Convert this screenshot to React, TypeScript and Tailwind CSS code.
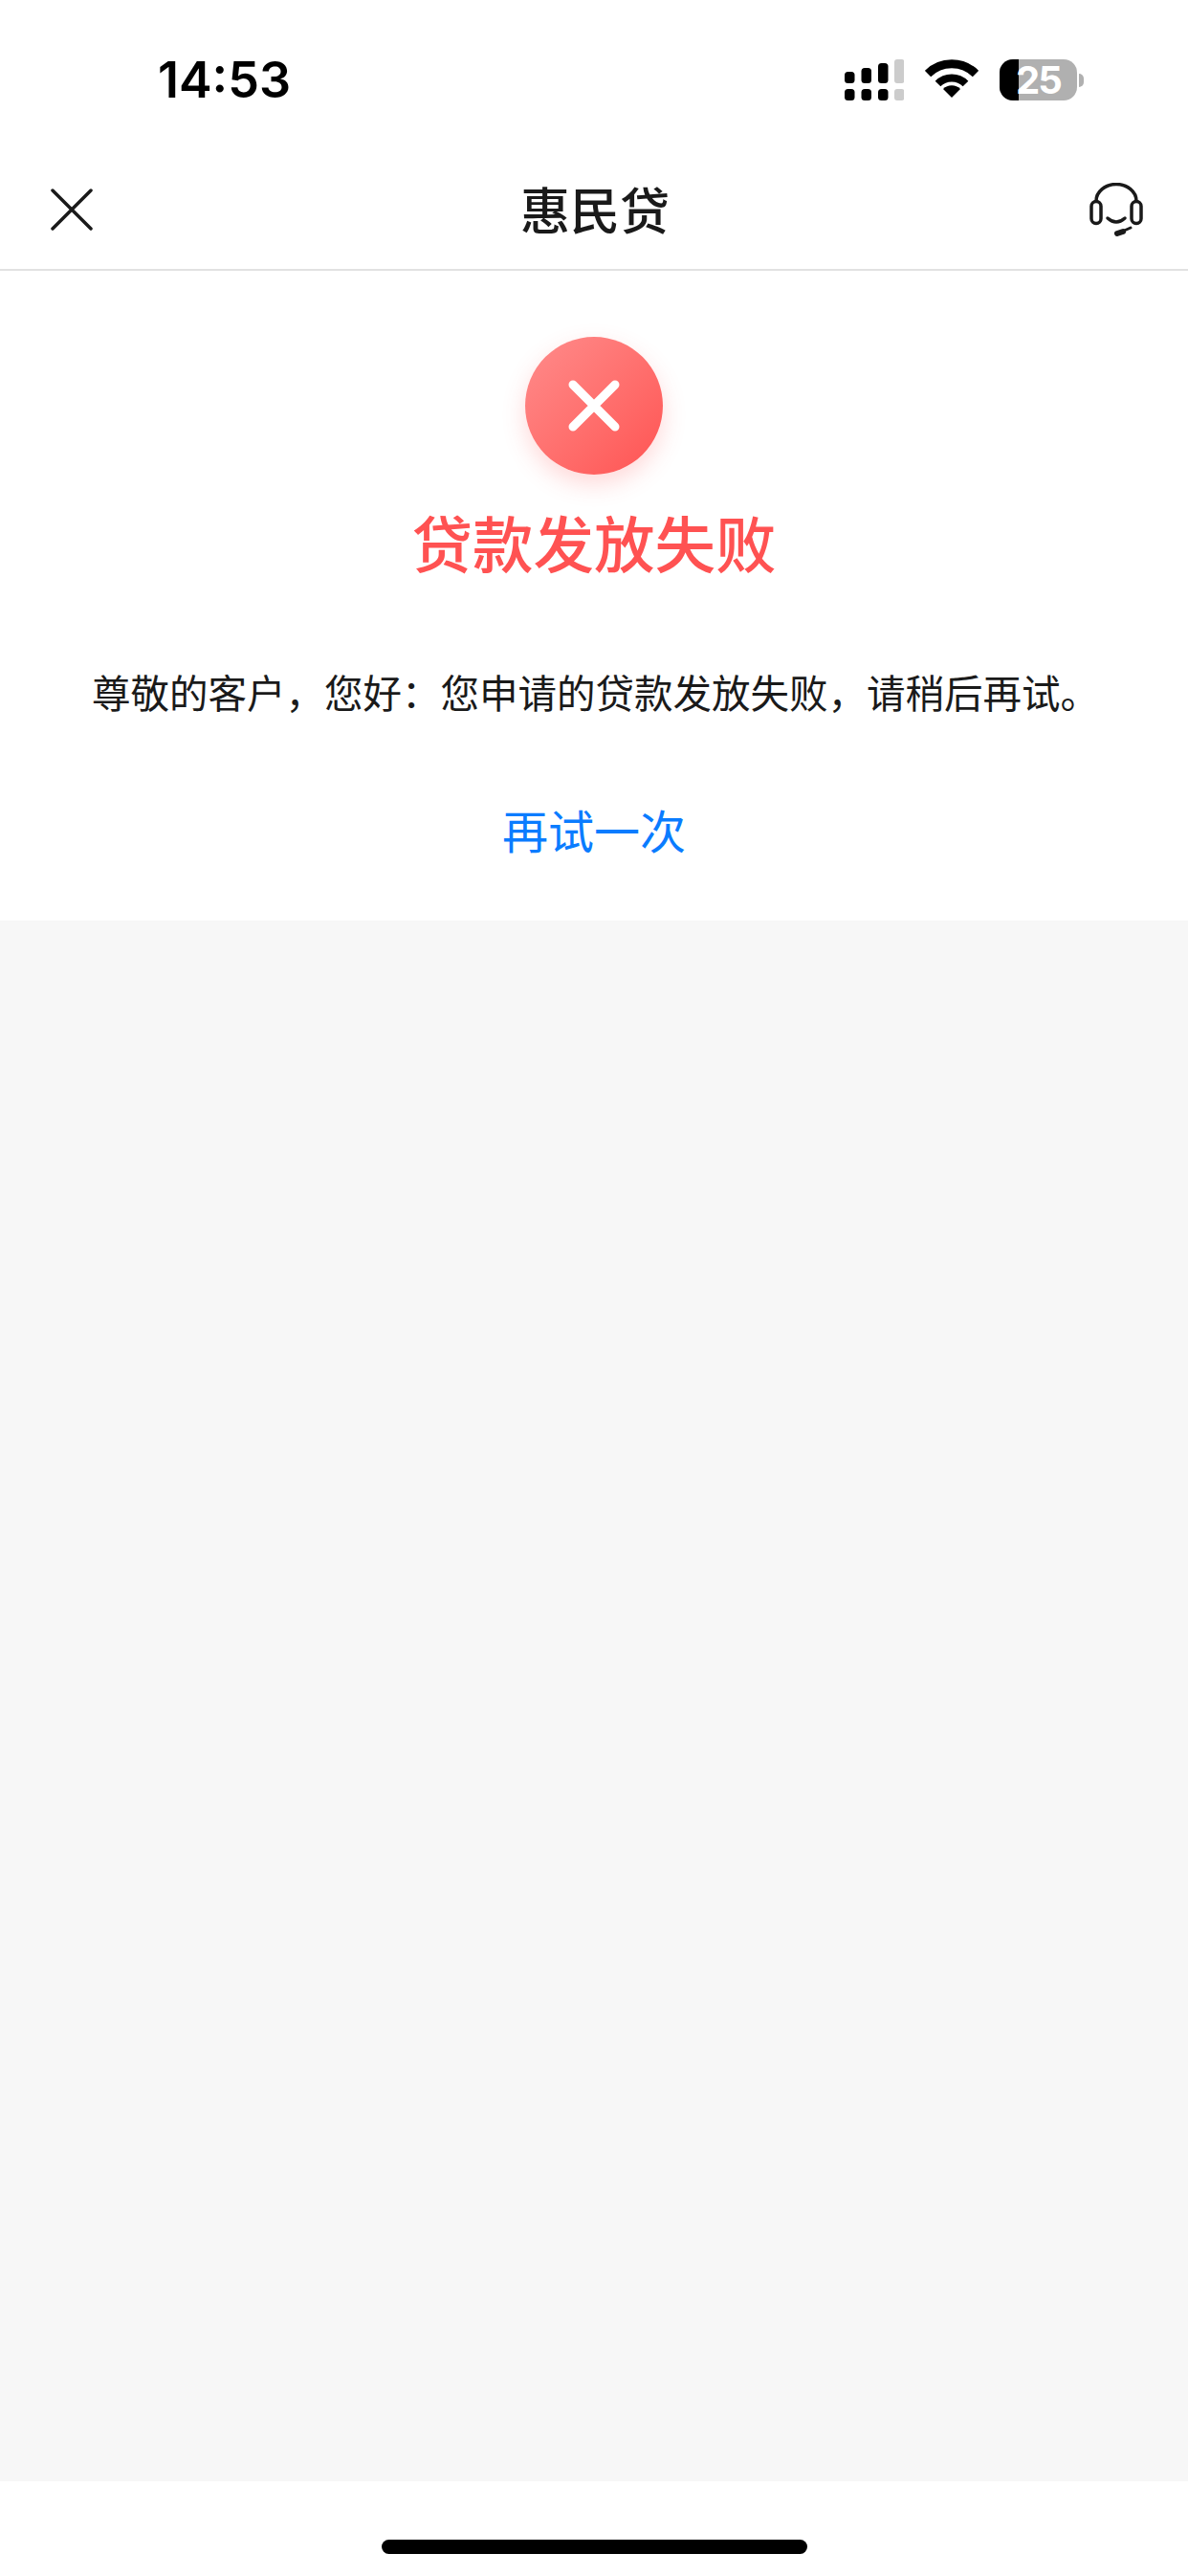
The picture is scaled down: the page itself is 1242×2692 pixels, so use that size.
const CJK = "font-['Noto_Sans_CJK_SC','Noto_Sans',sans-serif]";

function SignalIcon() {
  return (
    <svg width="62" height="43" viewBox="0 0 62 43">
      <rect x="0" y="13" width="10.5" height="12" rx="3.5" fill="#000" />
      <rect x="17.5" y="9" width="10.5" height="16" rx="3.5" fill="#000" />
      <rect x="35" y="4" width="10.5" height="21" rx="3.5" fill="#000" />
      <rect x="52" y="0" width="10.5" height="25" rx="3" fill="#ccc" />
      <rect x="0" y="31" width="10.5" height="12" rx="3.5" fill="#000" />
      <rect x="17.5" y="31" width="10.5" height="12" rx="3.5" fill="#000" />
      <rect x="35" y="31" width="10.5" height="12" rx="3.5" fill="#000" />
      <rect x="52" y="31" width="10.5" height="12" rx="3" fill="#ccc" />
    </svg>
  );
}

function WifiIcon() {
  return (
    <svg width="56" height="40" viewBox="0 0 56 40" fill="none">
      <path d="M3 15 A35.5 35.5 0 0 1 53 15" stroke="#000" strokeWidth="9" />
      <path d="M13.5 25.5 A20.5 20.5 0 0 1 42.5 25.5" stroke="#000" strokeWidth="8" />
      <path d="M28 40 L19 31 A12.7 12.7 0 0 1 37 31 Z" fill="#000" />
    </svg>
  );
}

function Battery() {
  return (
    <div className="flex items-center gap-[2px]">
      <div className="relative h-[43px] w-[81px] rounded-[14px] bg-[#b0b0b0]">
        <div className="h-full w-[20px] rounded-l-[14px] bg-black" />
        <span className="absolute inset-0 flex items-center justify-center font-['Inter',sans-serif] text-[40px] leading-none font-bold tracking-[-2px] text-white">
          25
        </span>
      </div>
      <div className="h-[14px] w-[5px] rounded-r-full bg-[#b0b0b0]" />
    </div>
  );
}

function HeadsetIcon() {
  return (
    <svg width="56" height="57" viewBox="0 0 56 57" fill="none" stroke="#1a1a1a" strokeLinecap="round">
      <path d="M7 19 A21 17.5 0 0 1 49 19" strokeWidth="3.5" />
      <rect x="2" y="19.5" width="10" height="23" rx="5" strokeWidth="3.5" />
      <rect x="44" y="19.5" width="10" height="23" rx="5" strokeWidth="3.5" />
      <path d="M19 37 Q28 45 37 37" strokeWidth="3.5" />
      <path d="M34 51 L43 47" strokeWidth="3" />
      <path d="M29 53 L35 51" strokeWidth="6" />
    </svg>
  );
}

export default function App() {
  return (
    <div className={`flex h-[2692px] w-[1242px] flex-col bg-white ${CJK}`} lang="zh-CN">
      <div className="flex h-[157px] shrink-0 items-start justify-between pt-[53px] pr-[109px] pl-[165px]">
        <span className="font-['Inter',sans-serif] text-[52px] leading-[62px] font-semibold text-black">14:53</span>
        <div className="mt-[9px] flex items-start gap-[22px]">
          <SignalIcon />
          <WifiIcon />
          <Battery />
        </div>
      </div>

      <div className="flex h-[126px] shrink-0 items-center justify-between border-b-2 border-[#e2e2e2] pr-[47px] pl-[53px]">
        <div className="w-[52px]">
          <svg width="44" height="44" viewBox="0 0 44 44" fill="none" stroke="#1a1a1a" strokeWidth="3.5" strokeLinecap="round">
            <path d="M2 2 L42 42 M42 2 L2 42" />
          </svg>
        </div>
        <span className="pb-[2px] text-[52px] leading-[72px] font-medium text-[#1a1a1a]">惠民贷</span>
        <HeadsetIcon />
      </div>

      <div className="flex h-[679px] shrink-0 flex-col items-center">
        <div className="mt-[69px] flex h-[144px] w-[144px] items-center justify-center rounded-full bg-linear-to-br from-[#ff8b8b] to-[#ff5252] shadow-[0_10px_24px_rgba(255,82,82,0.22)]">
          <svg width="54" height="54" viewBox="0 0 54 54" fill="none" stroke="#fff" strokeWidth="9" strokeLinecap="round">
            <path d="M5 5 L49 49 M49 5 L5 49" />
          </svg>
        </div>
        <h1 className="mt-[24px] text-[63.5px] leading-[90px] font-medium text-[#ff5252]">贷款发放失败</h1>
        <p className="mt-[85px] ml-[3px] text-[40.5px] leading-[56px] whitespace-nowrap text-[#1a1a1a]">
          尊敬的客户，您好：您申请的贷款发放失败，请稍后再试。
        </p>
        <button type="button" className="mt-[82px] text-[48px] leading-[66px] text-[#0a7cff]">
          再试一次
        </button>
      </div>

      <div className="flex-1 bg-[#f7f7f7]" />

      <div className="flex h-[99px] shrink-0 justify-center bg-white pt-[61px]">
        <div className="h-[15px] w-[445px] rounded-full bg-black" />
      </div>
    </div>
  );
}
